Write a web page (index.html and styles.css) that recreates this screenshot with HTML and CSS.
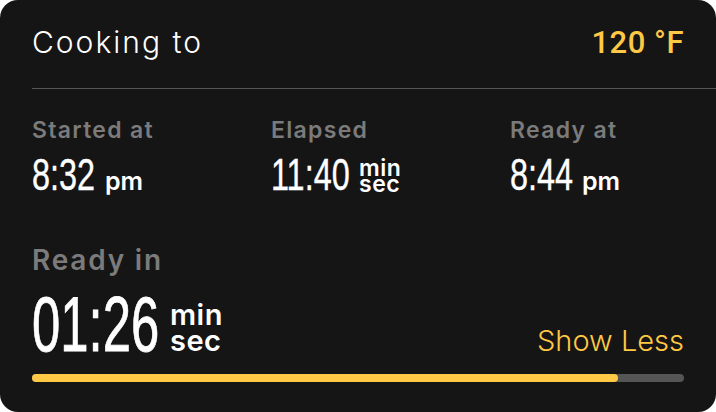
FILE: index.html
```html
<!doctype html>
<html lang="en">
<head>
    <meta charset="UTF-8">
    <title>Cooking</title>
    <link rel="stylesheet" href="styles.css">
</head>
<body>
    <div class="card">
        <div class="head">
            <h1 class="title">Cooking to</h1>
            <span class="target">120 °F</span>
        </div>
        <div class="stats">
            <div class="stat">
                <div class="label">Started at</div>
                <div class="value">
                    <span class="num" style="width:63px"><span>8:32</span></span><span class="unit">pm</span>
                </div>
            </div>
            <div class="stat">
                <div class="label">Elapsed</div>
                <div class="value">
                    <span class="num" style="width:78px"><span>11:40</span></span><span class="unit unit-stack">min<br>sec</span>
                </div>
            </div>
            <div class="stat">
                <div class="label">Ready at</div>
                <div class="value">
                    <span class="num" style="width:62px"><span>8:44</span></span><span class="unit">pm</span>
                </div>
            </div>
        </div>
        <div class="remain">
            <div class="label label-lg">Ready in</div>
            <div class="remain-row">
                <div class="value value-lg">
                    <span class="num" style="width:128px"><span>01:26</span></span><span class="unit unit-stack">min<br>sec</span>
                </div>
                <a class="toggle">Show Less</a>
            </div>
            <div class="bar"><div class="fill" style="width:89.9%"></div></div>
        </div>
    </div>
</body>
</html>
```

FILE: styles.css
```css
*{
    margin: 0;
    padding: 0;
    box-sizing: border-box;
}
body{
    background: #fff;
    font-family: Inter, "Noto Sans", sans-serif;
}
.card{
    width: 716px;
    height: 412px;
    background: #151515;
    border-radius: 18px;
    padding: 0 32px;
    overflow: hidden;
}
.head{
    display: flex;
    justify-content: space-between;
    align-items: baseline;
    margin-right: -32px;
    padding: 24px 32px 27px 0;
    border-bottom: 1px solid #555;
}
.title{
    font-size: 30px;
    line-height: 36px;
    font-weight: 300;
    letter-spacing: 2px;
    color: #fff;
}
.target{
    font-family: Roboto, sans-serif;
    font-size: 31px;
    line-height: 36px;
    font-weight: 500;
    letter-spacing: .5px;
    color: #ffc845;
}
.stats{
    display: grid;
    grid-template-columns: 239px 239px 1fr;
    padding-top: 27px;
}
.label{
    font-size: 23px;
    line-height: 28px;
    font-weight: 600;
    letter-spacing: 1.3px;
    color: #7b7b7b;
}
.value{
    margin-top: 11px;
    line-height: 0;
    color: #fff;
    white-space: nowrap;
}
.num{
    display: inline-block;
    font-family: "Liberation Sans", Arial, sans-serif;
    font-size: 45px;
    line-height: 40px;
    -webkit-text-stroke: .4px #fff;
}
.num span{
    display: inline-block;
    transform: scaleX(.72);
    transform-origin: left bottom;
}
.unit{
    display: inline-block;
    margin-left: 10px;
    font-size: 25px;
    line-height: 28px;
    font-weight: 600;
}
.unit-stack{
    font-size: 23px;
    line-height: 16px;
    letter-spacing: .5px;
    position: relative;
    top: 2px;
}
.remain{
    margin-top: 48px;
}
.label-lg{
    font-size: 28px;
    line-height: 34px;
    letter-spacing: 1.8px;
}
.remain-row{
    display: flex;
    justify-content: space-between;
    align-items: baseline;
    margin-top: 17px;
}
.value-lg{
    margin-top: 0;
}
.value-lg .num{
    font-size: 77px;
    line-height: 60px;
    -webkit-text-stroke: .8px #fff;
}
.value-lg .num span{
    transform: scaleX(.66);
}
.value-lg .unit-stack{
    font-size: 29px;
    line-height: 26px;
    top: 0;
}
.toggle{
    font-size: 29px;
    line-height: 30px;
    font-weight: 300;
    color: #ffc845;
    cursor: pointer;
}
.bar{
    height: 8px;
    margin-top: 18px;
    background: #555;
    border-radius: 4px;
}
.fill{
    height: 8px;
    background: #ffc845;
    border-radius: 4px;
}
```
